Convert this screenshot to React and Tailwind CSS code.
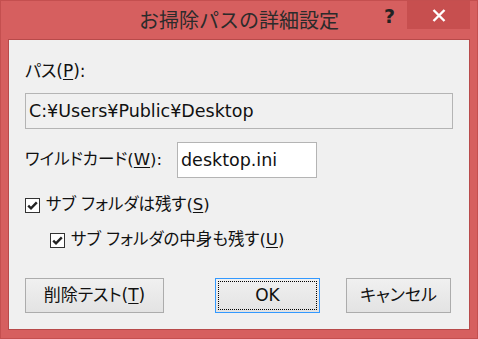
// App.jsx
import React from "react";

const font = { fontFamily: '"DejaVu Sans", "Noto Sans CJK JP", sans-serif' };

/* checkbox (checked) */
function Check({ label }) {
  return (
    <label className="flex h-4 items-center">
      <span className="flex h-[15px] w-[15px] items-center justify-center border border-[#333333] bg-white">
        <svg width="11" height="9" viewBox="0 0 11 9">
          <path d="M1.2 4.6 L4 7.3 L9.8 1.3" fill="none" stroke="#222" strokeWidth="2.4" />
        </svg>
      </span>
      <span className="ml-[6px] text-[16.5px] leading-4 text-[#111]">{label}</span>
    </label>
  );
}

function Btn({ children, focused, className = "" }) {
  return (
    <button
      className={`flex h-[35px] items-center justify-center border bg-gradient-to-b from-[#f0f0f0] to-[#e3e3e3] text-[17px] text-[#111] ${
        focused ? "border-[#3399ff] p-[2px]" : "border-[#acacac]"
      } ${className}`}
    >
      {focused ? (
        <span className="flex h-full w-full items-center justify-center border border-dotted border-black">
          {children}
        </span>
      ) : (
        children
      )}
    </button>
  );
}

const U = ({ children }) => <span className="underline underline-offset-2">{children}</span>;

export default function App() {
  return (
    <div
      style={font}
      className="flex h-[339px] w-[478px] flex-col border border-[#c44f4f] bg-[#d65f5f] [font-feature-settings:'palt']"
    >
      {/* title bar */}
      <div className="relative flex h-[38px] items-start justify-center">
        <span
          style={{ fontFamily: '"Noto Sans CJK JP", sans-serif' }}
          className="mt-[4px] text-[20px] leading-[30px] text-[#2b2b2b] [font-feature-settings:normal]"
        >
          お掃除パスの詳細設定
        </span>
        <span className="absolute right-[82px] top-[3px] text-[19px] font-bold leading-6 text-[#222]">?</span>
        <div className="absolute right-[7px] top-0 flex h-[28px] w-[63px] items-center justify-center bg-[#c74f4f]">
          <svg width="14" height="13" viewBox="0 0 14 13">
            <path d="M1.5 1 L12.5 12 M12.5 1 L1.5 12" stroke="#fff" strokeWidth="2.4" />
          </svg>
        </div>
      </div>

      {/* client area */}
      <div className="mx-[7px] h-[291px] border border-[#b84a4a] bg-[#f0f0f0] px-4">
        <div className="mt-[21px] h-5 text-[17px] leading-5 text-[#111]">
          パス(<U>P</U>):
        </div>
        <div className="mt-3 flex h-9 items-center border border-[#b4b4b4] bg-[#f0f0f0] px-[3px] text-[17.5px] text-[#111]">
          C:¥Users¥Public¥Desktop
        </div>

        <div className="mt-[13px] flex h-9 items-center">
          <span className="w-[152px] text-[16.5px] leading-5 text-[#111]">
            ワイルドカード(<U>W</U>):
          </span>
          <div className="flex h-9 w-[140px] items-center border border-[#b4b4b4] bg-white px-[3px] text-[17.5px] text-[#111]">
            desktop.ini
          </div>
        </div>

        <div className="mt-[19px]">
          <Check label={<>サブ フォルダは残す(<U>S</U>)</>} />
        </div>
        <div className="mt-[19px] pl-[25px]">
          <Check label={<>サブ フォルダの中身も残す(<U>U</U>)</>} />
        </div>

        <div className="mt-[30px] flex">
          <Btn className="w-[139px]">
            削除テスト(<U>T</U>)
          </Btn>
          <Btn focused className="ml-[51px] w-[105px]">OK</Btn>
          <Btn className="ml-[26px] w-[105px]">キャンセル</Btn>
        </div>
      </div>
    </div>
  );
}
